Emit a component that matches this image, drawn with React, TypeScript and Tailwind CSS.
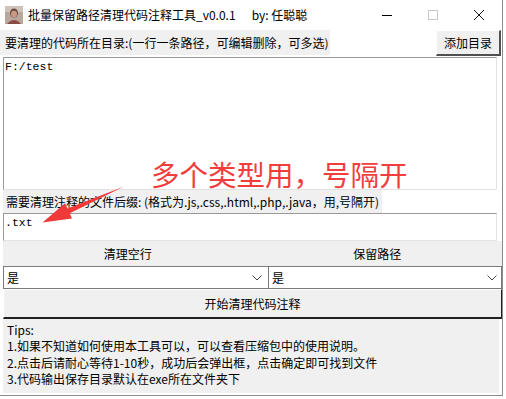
import React from "react";

const ui = { fontFamily: '"Noto Sans CJK SC", "Noto Sans", sans-serif' };
const mono = { fontFamily: '"Liberation Mono", "DejaVu Sans Mono", monospace' };

function Avatar() {
  return (
    <svg width="18" height="18" viewBox="0 0 18 18">
      <rect width="18" height="18" fill="#b9a79c" />
      <rect x="0" y="0" width="18" height="6" fill="#cfc2b8" />
      <ellipse cx="9" cy="7" rx="4" ry="4.5" fill="#6b4a3c" />
      <ellipse cx="9" cy="8" rx="3" ry="3.2" fill="#c89a85" />
      <path d="M2 18 Q9 10 16 18 Z" fill="#8a4b45" />
    </svg>
  );
}

function Chevron() {
  return (
    <svg width="10" height="6" viewBox="0 0 10 6" fill="none">
      <path d="M0.5 0.5 L5 5 L9.5 0.5" stroke="#444" strokeWidth="1" />
    </svg>
  );
}

export default function App() {
  return (
    <div className="relative h-[399px] w-[506px] overflow-hidden bg-white text-[12px] text-black" style={ui}>
      <div className="flex h-[396px] w-[503px] flex-col border-r border-b border-[#8c8c8c]">
        {/* title bar */}
        <div className="flex h-[30px] items-center">
          <div className="ml-[5px] mr-[5px]">
            <Avatar />
          </div>
          <span className="text-[12px]">批量保留路径清理代码注释工具_v0.0.1</span>
          <span className="ml-[16px] text-[12px]">by: 任聪聪</span>
          <div className="ml-auto flex h-full items-center">
            <div className="flex w-[46px] justify-center">
              <div className="h-px w-[10px] bg-black" />
            </div>
            <div className="flex w-[46px] justify-center">
              <div className="h-[10px] w-[10px] border border-[#c8c8c8]" />
            </div>
            <div className="flex w-[46px] justify-center">
              <svg width="10" height="10" viewBox="0 0 10 10">
                <path d="M0 0 L10 10 M10 0 L0 10" stroke="#111" strokeWidth="1" />
              </svg>
            </div>
          </div>
        </div>

        {/* row 1 */}
        <div className="flex h-[27px] items-start">
          <div className="flex h-[25px] items-center bg-[#f0f0f0] pl-[5px] pr-[2px]">
            要清理的代码所在目录:(一行一条路径，可编辑删除，可多选)
          </div>
          <button className="ml-auto mr-px flex h-[26px] w-[65px] items-center justify-center border-t border-l border-r-2 border-b-2 border-t-white border-l-white border-r-[#505050] border-b-[#505050] bg-[#f0f0f0] text-[12px]">
            添加目录
          </button>
        </div>

        {/* text area */}
        <div className="ml-[3px] h-[133px] w-[494px] border border-t-[#9a9a9a] border-l-[#9a9a9a] border-r-[#e3e3e3] border-b-[#e3e3e3] bg-white px-px pt-[1px] text-[11.5px] leading-[15px]" style={mono}>
          F:/test
        </div>

        {/* label 2 */}
        <div className="flex h-[23px]">
          <div className="ml-[3px] flex h-full items-center bg-[#f0f0f0] pl-[3px] pr-[3px]">
            需要清理注释的文件后缀: (格式为.js,.css,.html,.php,.java，用,号隔开)
          </div>
        </div>

        {/* entry */}
        <div className="ml-[3px] h-[28px] w-[494px] border border-t-[#9a9a9a] border-l-[#9a9a9a] border-r-[#e3e3e3] border-b-[#e3e3e3] bg-white px-px pt-[1px] text-[11.5px] leading-[15px]" style={mono}>
          .txt
        </div>

        {/* headers */}
        <div className="ml-[3px] grid h-[25px] w-[499px] grid-cols-2 bg-[#f0f0f0]">
          <div className="flex items-center justify-center">清理空行</div>
          <div className="flex items-center justify-center">保留路径</div>
        </div>

        {/* combos */}
        <div className="ml-[3px] flex h-[23px] w-[499px]">
          <div className="flex w-[266px] items-center border border-[#7a7a7a] bg-white pl-[3px] pr-[6px]">
            <span>是</span>
            <span className="ml-auto">
              <Chevron />
            </span>
          </div>
          <div className="flex flex-1 items-center border border-l-0 border-[#7a7a7a] bg-white pl-[3px] pr-[4px]">
            <span>是</span>
            <span className="ml-auto">
              <Chevron />
            </span>
          </div>
        </div>

        {/* start button */}
        <button className="ml-[3px] flex h-[30px] w-[499px] items-center justify-center border-t border-l border-r border-b-2 border-t-white border-l-white border-r-[#202020] border-b-[#202020] bg-[#f0f0f0] text-[12px]">
          开始清理代码注释
        </button>

        {/* tips */}
        <div className="ml-[3px] h-[74px] w-[496px] bg-[#f0f0f0] pl-[4px] pt-[3px] text-[12px] leading-[16.3px]">
          <div>Tips:</div>
          <div>1.如果不知道如何使用本工具可以，可以查看压缩包中的使用说明。</div>
          <div>2.点击后请耐心等待1-10秒，成功后会弹出框，点击确定即可找到文件</div>
          <div>3.代码输出保存目录默认在exe所在文件夹下</div>
        </div>
      </div>

      {/* annotation overlay */}
      <div className="absolute left-[151px] top-[157px] text-[28.5px] leading-[34px] text-[#f23d3d]" style={ui}>
        多个类型用，号隔开
      </div>
      <svg className="absolute left-0 top-0" width="506" height="399" viewBox="0 0 506 399">
        <polygon
          points="124,186.5 69.8,213.3 72,218.5 42.5,222.5 65,203.2 67.4,208.6"
          fill="#f03a3a"
        />
      </svg>
    </div>
  );
}
